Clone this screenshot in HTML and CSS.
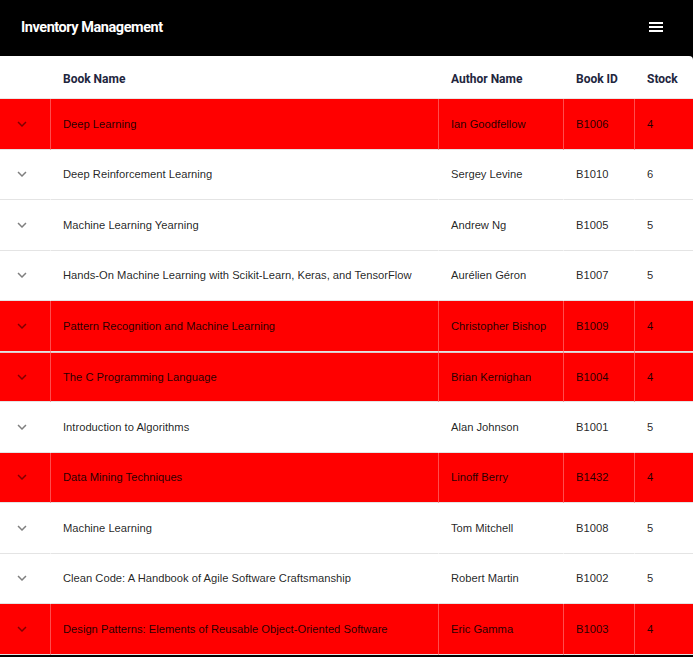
FILE: index.html
```html
<!DOCTYPE html>
<html lang="en">
<head>
<meta charset="utf-8">
<title>Inventory Management</title>
<link rel="stylesheet" href="styles.css">
</head>
<body>
<header class="appbar">
  <h1 class="title">Inventory Management</h1>
  <button class="menu" aria-label="menu">
    <svg width="14" height="12" viewBox="0 0 14 12"><rect x="0" y="1" width="14" height="2" fill="#fff"/><rect x="0" y="5" width="14" height="2" fill="#fff"/><rect x="0" y="9" width="14" height="2" fill="#fff"/></svg>
  </button>
</header>
<main class="paper">
  <table class="inv">
    <colgroup>
      <col class="c-exp"><col class="c-name"><col class="c-author"><col class="c-id"><col class="c-stock">
    </colgroup>
    <thead>
      <tr><th></th><th>Book Name</th><th>Author Name</th><th>Book ID</th><th>Stock</th></tr>
    </thead>
    <tbody>
      <tr class="low"><td class="exp"><svg viewBox="0 0 24 24"><path d="M16.59 8.59 12 13.17 7.41 8.59 6 10l6 6 6-6z"/></svg></td><td>Deep Learning</td><td>Ian Goodfellow</td><td>B1006</td><td>4</td></tr>
      <tr><td class="exp"><svg viewBox="0 0 24 24"><path d="M16.59 8.59 12 13.17 7.41 8.59 6 10l6 6 6-6z"/></svg></td><td>Deep Reinforcement Learning</td><td>Sergey Levine</td><td>B1010</td><td>6</td></tr>
      <tr><td class="exp"><svg viewBox="0 0 24 24"><path d="M16.59 8.59 12 13.17 7.41 8.59 6 10l6 6 6-6z"/></svg></td><td>Machine Learning Yearning</td><td>Andrew Ng</td><td>B1005</td><td>5</td></tr>
      <tr><td class="exp"><svg viewBox="0 0 24 24"><path d="M16.59 8.59 12 13.17 7.41 8.59 6 10l6 6 6-6z"/></svg></td><td>Hands-On Machine Learning with Scikit-Learn, Keras, and TensorFlow</td><td>Aurélien Géron</td><td>B1007</td><td>5</td></tr>
      <tr class="low"><td class="exp"><svg viewBox="0 0 24 24"><path d="M16.59 8.59 12 13.17 7.41 8.59 6 10l6 6 6-6z"/></svg></td><td>Pattern Recognition and Machine Learning</td><td>Christopher Bishop</td><td>B1009</td><td>4</td></tr>
      <tr class="low"><td class="exp"><svg viewBox="0 0 24 24"><path d="M16.59 8.59 12 13.17 7.41 8.59 6 10l6 6 6-6z"/></svg></td><td>The C Programming Language</td><td>Brian Kernighan</td><td>B1004</td><td>4</td></tr>
      <tr><td class="exp"><svg viewBox="0 0 24 24"><path d="M16.59 8.59 12 13.17 7.41 8.59 6 10l6 6 6-6z"/></svg></td><td>Introduction to Algorithms</td><td>Alan Johnson</td><td>B1001</td><td>5</td></tr>
      <tr class="low"><td class="exp"><svg viewBox="0 0 24 24"><path d="M16.59 8.59 12 13.17 7.41 8.59 6 10l6 6 6-6z"/></svg></td><td>Data Mining Techniques</td><td>Linoff Berry</td><td>B1432</td><td>4</td></tr>
      <tr><td class="exp"><svg viewBox="0 0 24 24"><path d="M16.59 8.59 12 13.17 7.41 8.59 6 10l6 6 6-6z"/></svg></td><td>Machine Learning</td><td>Tom Mitchell</td><td>B1008</td><td>5</td></tr>
      <tr><td class="exp"><svg viewBox="0 0 24 24"><path d="M16.59 8.59 12 13.17 7.41 8.59 6 10l6 6 6-6z"/></svg></td><td>Clean Code: A Handbook of Agile Software Craftsmanship</td><td>Robert Martin</td><td>B1002</td><td>5</td></tr>
      <tr class="low"><td class="exp"><svg viewBox="0 0 24 24"><path d="M16.59 8.59 12 13.17 7.41 8.59 6 10l6 6 6-6z"/></svg></td><td>Design Patterns: Elements of Reusable Object-Oriented Software</td><td>Eric Gamma</td><td>B1003</td><td>4</td></tr>
    </tbody>
  </table>
</main>
</body>
</html>
```
FILE: styles.css
```css
* { box-sizing: border-box; }
html, body { margin: 0; padding: 0; background: #000; }
body { font-family: "Liberation Sans", Arial, sans-serif; }

.appbar {
  height: 56px;
  background: #000;
  display: flex;
  align-items: center;
  justify-content: space-between;
  padding: 0 22px 2px 21px;
}
.title {
  margin: 0;
  color: #fff;
  font-family: Roboto, "Noto Sans", sans-serif;
  font-weight: 700;
  font-size: 14.5px;
  letter-spacing: -0.45px;
}
.menu {
  background: none;
  border: 0;
  padding: 0;
  width: 24px;
  height: 24px;
  display: flex;
  align-items: center;
  justify-content: center;
  margin: 0 3px 1px 0;
}

.paper {
  background: #fff;
  border-top-right-radius: 4px;
  overflow: hidden;
}
.inv {
  width: 100%;
  table-layout: fixed;
  border-collapse: separate;
  border-spacing: 0;
}
.c-exp { width: 50px; }
.c-name { width: 388px; }
.c-author { width: 125px; }
.c-id { width: 71px; }

.inv th {
  height: 43px;
  padding: 3px 13px 0;
  text-align: left;
  font-family: Roboto, "Noto Sans", sans-serif;
  font-weight: 700;
  font-size: 12px;
  color: #22253d;
  border-bottom: 1px solid #e8e8e8;
}
.inv td {
  height: 50.5px;
  padding: 0 13px;
  font-family: "Liberation Sans", Arial, sans-serif;
  font-size: 11.2px;
  color: rgba(0, 0, 0, 0.87);
  border-bottom: 1px solid #e4e4e4;
  white-space: nowrap;
  overflow: hidden;
  vertical-align: middle;
}
.inv td + td {
  border-left: 1px solid rgba(255, 255, 255, 0.3);
  padding-left: 12px;
}
.inv tr.low td { background: #ff0000; }
.inv tr.low + tr.low td { border-top: 1px solid #e0c8c8; }

.inv td.exp { padding: 0; }
.exp svg {
  width: 18px;
  height: 18px;
  display: block;
  margin: 0 0 0 13px;
  fill: rgba(0, 0, 0, 0.5);
}
```
